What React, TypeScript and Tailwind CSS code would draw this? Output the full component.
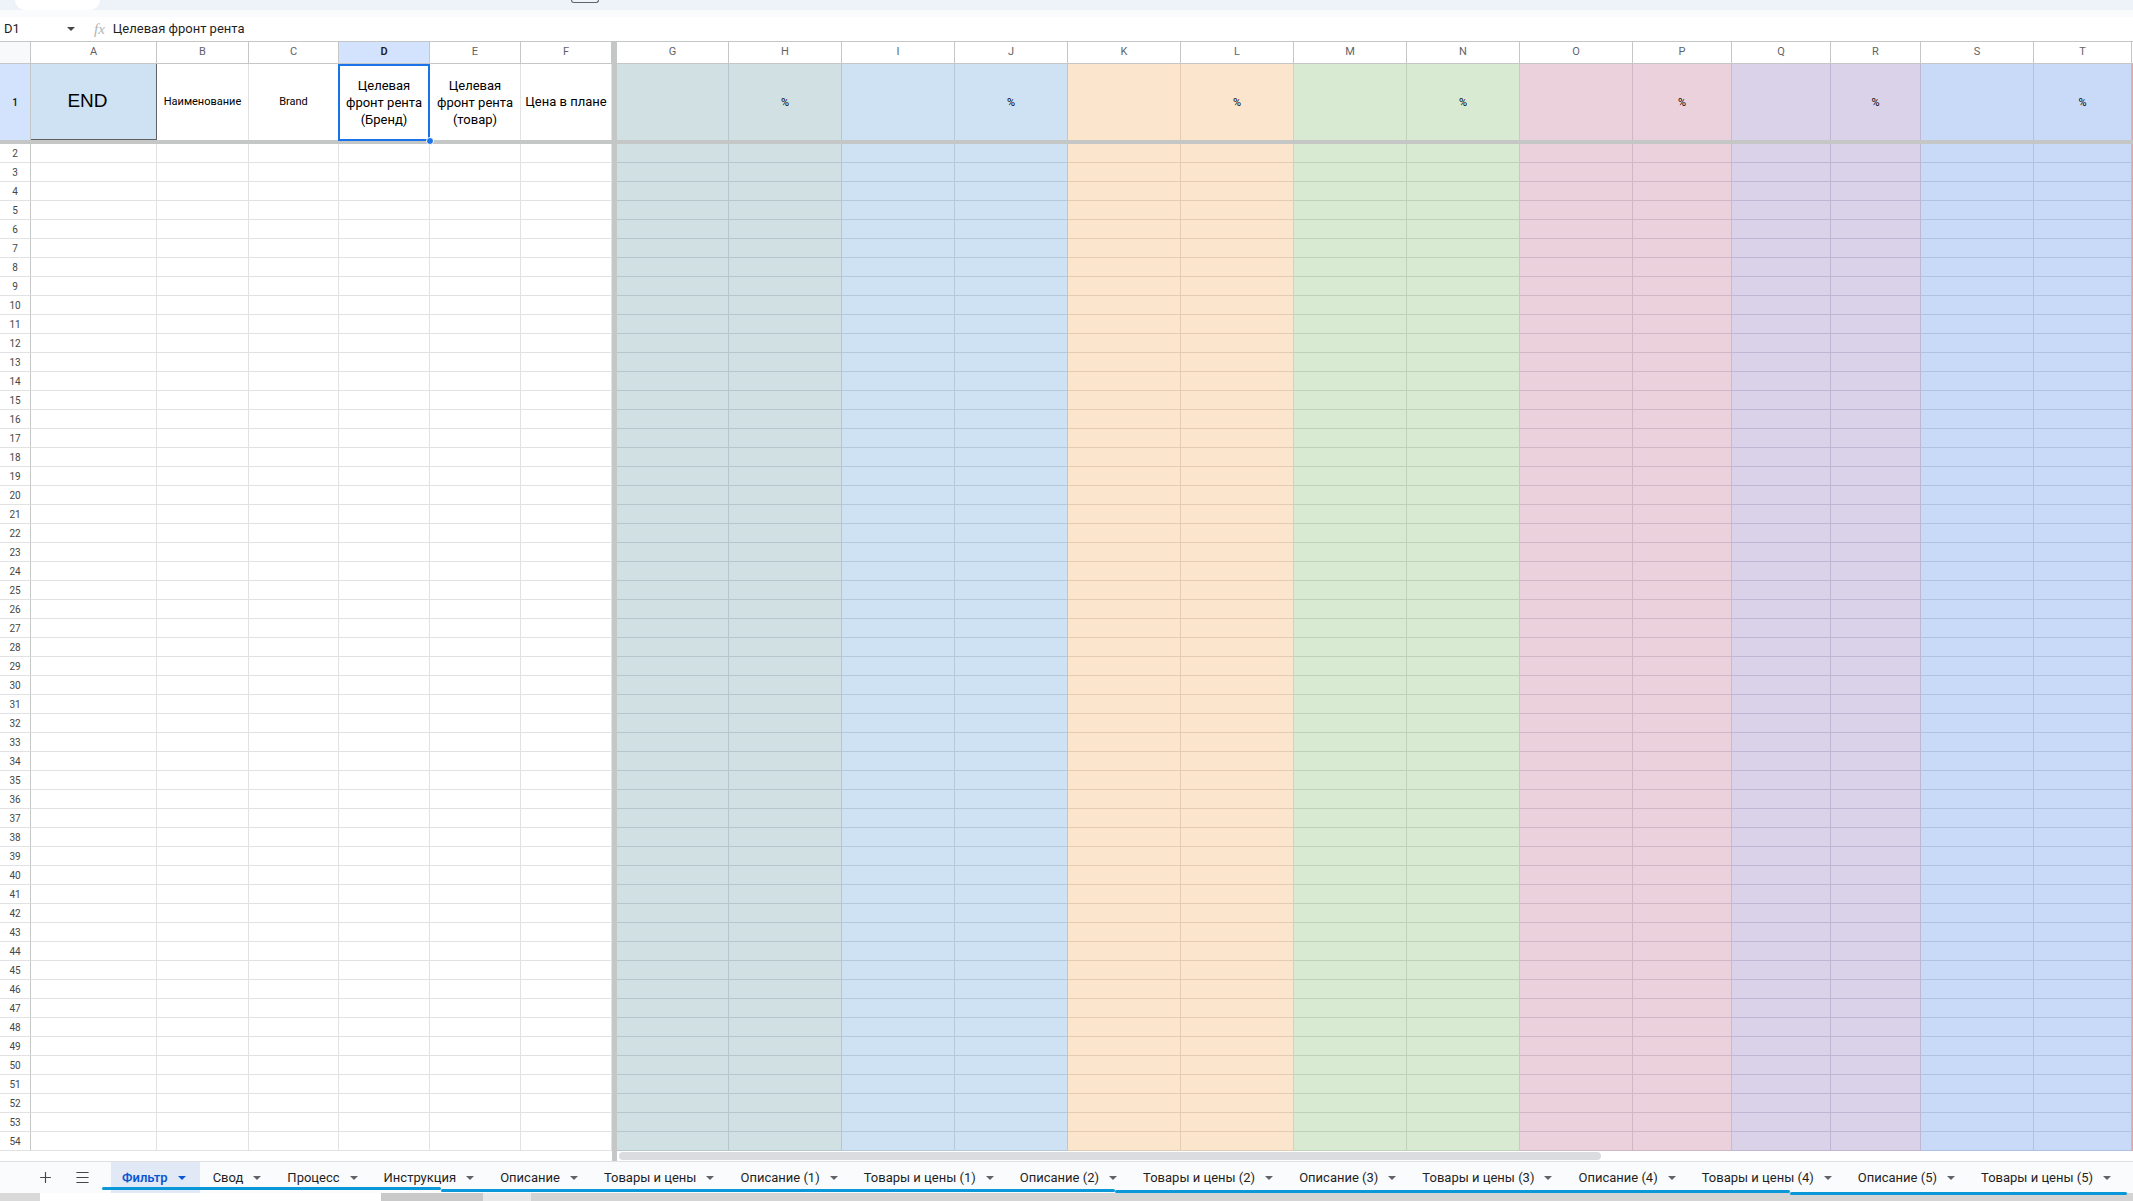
import React from 'react';
import { Plus, Menu } from 'lucide-react';

type Col = { l: string; w: string; bg: string; line: string; sep?: boolean; edge?: boolean };

// ширины колонок сняты со скриншота (границы 31, 157, 249 ...)
const cols: Col[] = [
  { l: 'A', w: 'w-[126px]', bg: 'bg-white', line: 'border-[#e2e2e3]' },
  { l: 'B', w: 'w-[92px]', bg: 'bg-white', line: 'border-[#e2e2e3]' },
  { l: 'C', w: 'w-[90px]', bg: 'bg-white', line: 'border-[#e2e2e3]' },
  { l: 'D', w: 'w-[91px]', bg: 'bg-white', line: 'border-[#e2e2e3]' },
  { l: 'E', w: 'w-[91px]', bg: 'bg-white', line: 'border-[#e2e2e3]' },
  { l: 'F', w: 'w-[91px]', bg: 'bg-white', line: 'border-[#e2e2e3]' },
  { l: '', w: 'w-[5px]', bg: 'bg-[#c4c7c5]', line: '', sep: true },
  { l: 'G', w: 'w-[112px]', bg: 'bg-[#d0e0e3]', line: 'border-[#b6c7cb]' },
  { l: 'H', w: 'w-[113px]', bg: 'bg-[#d0e0e3]', line: 'border-[#b6c7cb]' },
  { l: 'I', w: 'w-[113px]', bg: 'bg-[#cfe2f3]', line: 'border-[#b4c9dc]' },
  { l: 'J', w: 'w-[113px]', bg: 'bg-[#cfe2f3]', line: 'border-[#b4c9dc]' },
  { l: 'K', w: 'w-[113px]', bg: 'bg-[#fce5cd]', line: 'border-[#e4ccb2]' },
  { l: 'L', w: 'w-[113px]', bg: 'bg-[#fce5cd]', line: 'border-[#e4ccb2]' },
  { l: 'M', w: 'w-[113px]', bg: 'bg-[#d9ead3]', line: 'border-[#bed2b7]' },
  { l: 'N', w: 'w-[113px]', bg: 'bg-[#d9ead3]', line: 'border-[#bed2b7]' },
  { l: 'O', w: 'w-[113px]', bg: 'bg-[#ead1dc]', line: 'border-[#d3b6c3]' },
  { l: 'P', w: 'w-[99px]', bg: 'bg-[#ead1dc]', line: 'border-[#d3b6c3]' },
  { l: 'Q', w: 'w-[99px]', bg: 'bg-[#d9d2e9]', line: 'border-[#bfb6d3]' },
  { l: 'R', w: 'w-[90px]', bg: 'bg-[#d9d2e9]', line: 'border-[#bfb6d3]' },
  { l: 'S', w: 'w-[113px]', bg: 'bg-[#c9daf8]', line: 'border-[#afc2e2]' },
  { l: 'T', w: 'w-[98px]', bg: 'bg-[#c9daf8]', line: 'border-[#afc2e2]' },
  { l: '', w: 'w-[1px]', bg: 'bg-[#e3a7a7]', line: '', edge: true },
];

const pct = ['H', 'J', 'L', 'N', 'P', 'R', 'T'];

const tabs = [
  'Фильтр', 'Свод', 'Процесс', 'Инструкция', 'Описание', 'Товары и цены',
  'Описание (1)', 'Товары и цены (1)', 'Описание (2)', 'Товары и цены (2)',
  'Описание (3)', 'Товары и цены (3)', 'Описание (4)', 'Товары и цены (4)',
  'Описание (5)', 'Товары и цены (5)',
];

const Caret = () => (
  <svg width="8" height="4" viewBox="0 0 8 4" className="shrink-0">
    <path d="M0 0h8L4 4z" fill="currentColor" />
  </svg>
);

function HeaderRow() {
  return (
    <div className="flex h-[22px]">
      <div className="w-[31px] shrink-0 bg-[#f8f9fa] border-r border-b border-[#c4c7c5]" />
      {cols.map((c, i) => {
        if (c.sep) return <div key={i} className={`${c.w} shrink-0 ${c.bg}`} />;
        if (c.edge) return <div key={i} className={`${c.w} shrink-0 bg-white border-b border-[#c4c7c5]`} />;
        const active = c.l === 'D';
        return (
          <div
            key={i}
            className={`${c.w} shrink-0 flex items-center justify-center border-r border-b border-[#c4c7c5] text-[11px] ${
              active ? 'bg-[#d3e3fd] text-[#1f1f1f] font-semibold' : 'bg-white text-[#5f6368]'
            }`}
          >
            {c.l}
          </div>
        );
      })}
    </div>
  );
}

function cellText(l: string) {
  if (l === 'A') return <span className="pr-[12px] text-[19px] font-['Liberation_Sans',Arial,sans-serif]">END</span>;
  if (l === 'B') return <span className="text-[11px]">Наименование</span>;
  if (l === 'C') return <span className="text-[11px]">Brand</span>;
  if (l === 'D') return <span className="text-[13px] leading-[17px]">Целевая<br />фронт рента<br />(Бренд)</span>;
  if (l === 'E') return <span className="text-[13px] leading-[17px]">Целевая<br />фронт рента<br />(товар)</span>;
  if (l === 'F') return <span className="text-[13px]">Цена в плане</span>;
  if (pct.includes(l)) return <span className="pt-[2px] text-[11px]">%</span>;
  return null;
}

function FirstRow() {
  return (
    <div className="flex h-[76px]">
      <div className="w-[31px] shrink-0 flex items-center justify-center bg-[#d3e3fd] border-r border-[#c4c7c5] text-[10px] font-semibold text-[#1f1f1f]">
        1
      </div>
      {cols.map((c, i) => {
        if (c.sep || c.edge) return <div key={i} className={`${c.w} shrink-0 ${c.bg}`} />;
        if (c.l === 'A')
          return (
            <div key={i} className={`${c.w} shrink-0 flex items-center justify-center bg-[#cfe2f3] border-r border-b border-[#616161] text-black`}>
              {cellText(c.l)}
            </div>
          );
        return (
          <div key={i} className={`${c.w} shrink-0 relative flex items-center justify-center text-center text-black border-r ${c.bg} ${c.line}`}>
            {cellText(c.l)}
            {c.l === 'D' && (
              <>
                <div className="absolute -left-px top-0 -right-px -bottom-px border-2 border-[#1a73e8]" />
                <div className="absolute -right-[5px] -bottom-[5px] w-[8px] h-[8px] rounded-full bg-[#1a73e8] border border-white z-10" />
              </>
            )}
          </div>
        );
      })}
    </div>
  );
}

function Row({ n }: { n: number }) {
  return (
    <div className="flex h-[19px]">
      <div className="w-[31px] shrink-0 flex items-center justify-center bg-white border-r border-b border-r-[#c4c7c5] border-b-[#e2e2e3] text-[10px] text-[#444746]">
        {n}
      </div>
      {cols.map((c, i) =>
        c.sep || c.edge ? (
          <div key={i} className={`${c.w} shrink-0 ${c.bg}`} />
        ) : (
          <div key={i} className={`${c.w} shrink-0 border-r border-b ${c.bg} ${c.line}`} />
        )
      )}
    </div>
  );
}

export default function App() {
  const rows = Array.from({ length: 53 }, (_, i) => i + 2);
  return (
    <div className="w-[2133px] h-[1201px] overflow-hidden bg-white font-['Roboto','Noto_Sans',sans-serif] text-[#1f1f1f]">
      {/* остаток панели браузера */}
      <div className="flex h-[10px] bg-[#eef2f9]">
        <div className="ml-[15px] w-[85px] h-[10px] bg-white rounded-b-full" />
        <div className="ml-[471px] w-[28px] h-[3px] border border-t-0 border-[#5f6368] rounded-b-sm" />
      </div>
      <div className="h-[7px] bg-[#f9fbfd]" />

      {/* строка формул */}
      <div className="flex items-center h-[25px] border-b border-[#c4c7c5] text-[13px]">
        <span className="pl-[4px] w-[67px]">D1</span>
        <span className="text-[#444746]"><Caret /></span>
        <span className="ml-[19px] italic text-[15px] text-[#b0b4b9] font-['Liberation_Serif',serif]">fx</span>
        <span className="ml-[8px]">Целевая фронт рента</span>
      </div>

      <HeaderRow />
      <FirstRow />
      <div className="h-[4px] bg-[#c4c7c5]" />
      {rows.map((n) => (
        <Row key={n} n={n} />
      ))}

      {/* горизонтальная прокрутка */}
      <div className="flex h-[10px]">
        <div className="w-[612px] bg-white" />
        <div className="w-[5px] bg-[#c4c7c5]" />
        <div className="ml-[2px] mt-[1px] w-[982px] h-[8px] rounded-full bg-[#dadce0]" />
      </div>

      {/* вкладки листов */}
      <div className="relative flex items-center h-[32px] border-t border-[#e0e0e0] bg-[#f9fbfd] text-[13px] text-[#1f1f1f]">
        <div className="ml-[33px] w-[24px] shrink-0 flex justify-center text-[#444746]">
          <Plus size={17} strokeWidth={1.6} />
        </div>
        <div className="ml-[13px] w-[24px] shrink-0 flex justify-center text-[#444746]">
          <Menu size={17} strokeWidth={1.6} />
        </div>
        <div className="ml-[17px] flex h-full shrink-0">
          {tabs.map((t, i) => (
            <div
              key={t}
              className={`flex items-center h-full shrink-0 whitespace-nowrap ${
                i === 0 ? 'pl-[11px] pr-[14px] bg-[#e1e9f7] text-[#0b57d0] font-semibold' : 'px-[13px]'
              }`}
            >
              {t}
              <span className={`ml-[10px] ${i === 0 ? 'text-[#0b57d0]' : 'text-[#5f6368]'}`}>
                <Caret />
              </span>
            </div>
          ))}
        </div>
        <div className="absolute left-[102px] top-[25px] w-[339px] h-[3px] rounded-full bg-[#0b98d8]" />
        <div className="absolute left-[441px] top-[27px] w-[674px] h-[3px] rounded-full bg-[#0b98d8]" />
        <div className="absolute left-[1115px] top-[28px] w-[675px] h-[3px] rounded-full bg-[#0b98d8]" />
        <div className="absolute left-[1790px] top-[30px] w-[337px] h-[3px] rounded-full bg-[#0b98d8]" />
      </div>

      <div className="flex h-[8px]">
        <div className="w-[40px] bg-[#d9d9d9]" />
        <div className="w-[341px] bg-white" />
        <div className="w-[102px] bg-[#c9c9c9]" />
        <div className="w-[48px] bg-[#e8e8e8]" />
        <div className="flex-1 bg-[#d4d4d4]" />
      </div>
    </div>
  );
}
